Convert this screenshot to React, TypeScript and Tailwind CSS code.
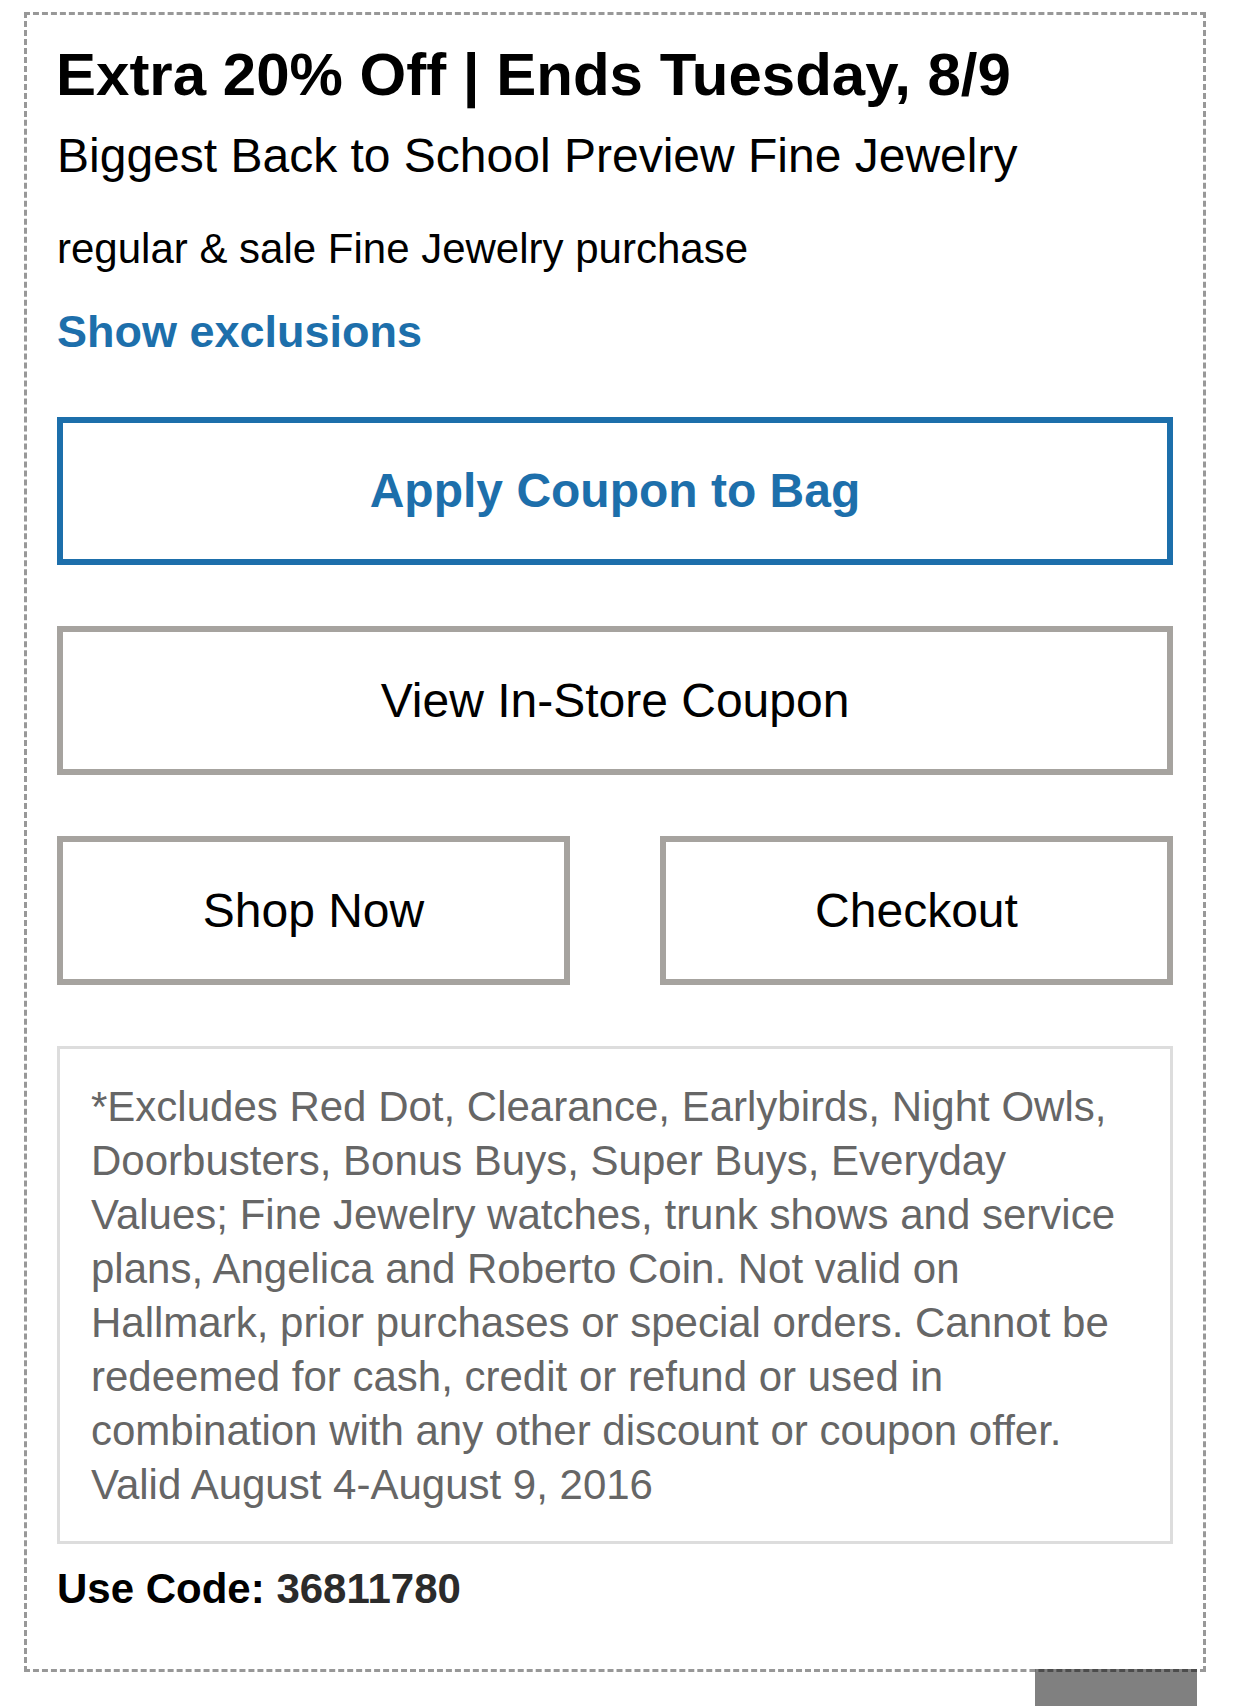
import React from 'react'

const font = "font-['Liberation_Sans',Arial,Helvetica,sans-serif]"

function OutlineButton({
  label,
  tone = 'gray',
  className = '',
}: {
  label: string
  tone?: 'blue' | 'gray'
  className?: string
}) {
  const toneClass =
    tone === 'blue'
      ? 'border-[#1d6fab] text-[#1d6fab] font-bold'
      : 'border-[#a6a39f] text-black font-normal'

  return (
    <button
      type="button"
      className={`flex items-center justify-center border-[6px] bg-white text-[48px] leading-[56px] ${toneClass} ${className}`}
    >
      {label}
    </button>
  )
}

const exclusionLines = [
  '*Excludes Red Dot, Clearance, Earlybirds, Night Owls,',
  'Doorbusters, Bonus Buys, Super Buys, Everyday',
  'Values; Fine Jewelry watches, trunk shows and service',
  'plans, Angelica and Roberto Coin. Not valid on',
  'Hallmark, prior purchases or special orders. Cannot be',
  'redeemed for cash, credit or refund or used in',
  'combination with any other discount or coupon offer.',
  'Valid August 4-August 9, 2016',
]

function Exclusions() {
  return (
    <div className="mt-[61px] border-[3px] border-[#dddddd] bg-white pt-[31px] pb-[29px] pl-[31px] pr-[20px]">
      <p className="whitespace-nowrap text-[42px] leading-[54px] text-[#666666]">
        {exclusionLines.map((line, i) => (
          <React.Fragment key={i}>
            {line}
            {i < exclusionLines.length - 1 && <br />}
          </React.Fragment>
        ))}
      </p>
    </div>
  )
}

export default function App() {
  return (
    <div className={`relative min-h-[1706px] w-[1236px] overflow-hidden bg-white pl-[24px] pt-[12px] ${font}`}>
      {/* cut-off grey tab at the bottom edge */}
      <div className="absolute left-[1035px] top-[1669px] h-[60px] w-[162px] bg-[#808080]" />

      <div className="relative w-[1182px] border-[3px] border-dashed border-black/40 px-[30px] pt-[26px] pb-[56px]">
        <div>
          <h1 className="-ml-[1px] whitespace-nowrap text-[60px] font-bold leading-[68px] text-black">
            Extra 20% Off | Ends Tuesday, 8/9
          </h1>
          <p className="mt-[19px] whitespace-nowrap text-[48px] leading-[56px] text-black">
            Biggest Back to School Preview Fine Jewelry
          </p>
          <p className="mt-[41px] whitespace-nowrap text-[42px] leading-[48px] text-black">
            regular &amp; sale Fine Jewelry purchase
          </p>
          <a href="#" className="mt-[33px] block text-[45px] font-bold leading-[52px] text-[#1d6fab]">
            Show exclusions
          </a>
        </div>

        <OutlineButton label="Apply Coupon to Bag" tone="blue" className="mt-[59px] h-[148px] w-full" />
        <OutlineButton label="View In-Store Coupon" className="mt-[61px] h-[149px] w-full" />

        <div className="mt-[61px] flex gap-[90px]">
          <OutlineButton label="Shop Now" className="h-[149px] flex-1" />
          <OutlineButton label="Checkout" className="h-[149px] flex-1" />
        </div>

        <Exclusions />

        <p className="mt-[21px] text-[42px] font-bold leading-[48px] text-black">
          Use Code: <span className="text-[#2b2b2b]">36811780</span>
        </p>
      </div>
    </div>
  )
}
